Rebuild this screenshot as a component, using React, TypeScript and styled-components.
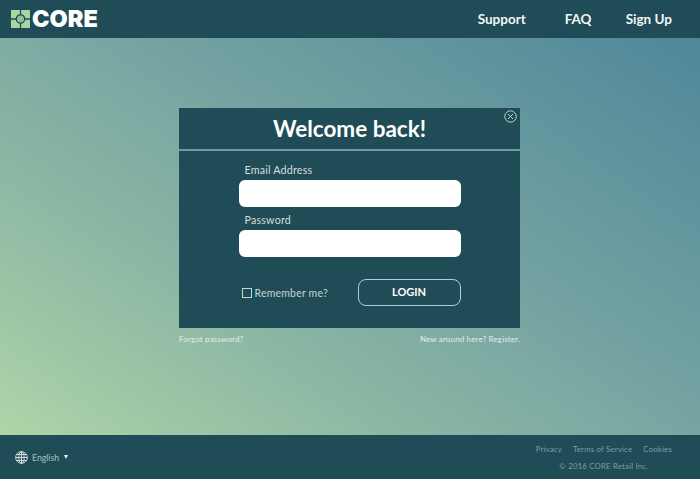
import styled, { createGlobalStyle } from "styled-components";

const Global = createGlobalStyle`
  html, body, #root {
    margin: 0;
    height: 100%;
  }
  body {
    font-family: Lato, "Open Sans", sans-serif;
  }
`;

const Page = styled.div`
  width: 700px;
  height: 479px;
  display: flex;
  flex-direction: column;
  overflow: hidden;
  background: linear-gradient(34deg, #b4d9a8 0%, #8db8a4 32%, #74a2a2 58%, #4b8498 100%);
`;

const Header = styled.header`
  height: 38px;
  flex-shrink: 0;
  background: #1f4c56;
  display: flex;
  align-items: center;
  justify-content: space-between;
  padding: 0 28px 0 11px;
`;

const Logo = styled.div`
  display: flex;
  align-items: center;
  gap: 2px;
`;

const LogoText = styled.span`
  font-family: Inter, sans-serif;
  font-weight: 900;
  font-size: 23.500px;
  line-height: 24px;
  color: #fff;
`;

const Nav = styled.nav`
  display: grid;
  grid-template-columns: 87px 61px auto;
`;

const NavLink = styled.a`
  font-family: Lato, sans-serif;
  font-weight: 700;
  font-size: 13.500px;
  color: #f2f6f6;
`;

const Main = styled.main`
  flex: 1;
  display: flex;
  flex-direction: column;
  align-items: center;
  padding: 70px 1px 0 0;
`;

const Modal = styled.section`
  position: relative;
  width: 341px;
  height: 220px;
  background: #1f4c56;
  display: flex;
  flex-direction: column;
`;

const ModalHead = styled.div`
  height: 41px;
  border-bottom: 2px solid #6a9ea3;
  display: flex;
  align-items: center;
  justify-content: center;
`;

const Title = styled.h1`
  margin: 0;
  font-family: Lato, sans-serif;
  font-weight: 700;
  font-size: 22.500px;
  color: #fff;
`;

const Close = styled.button`
  position: absolute;
  top: 2px;
  right: 3px;
  width: 13px;
  height: 13px;
  padding: 0;
  border: none;
  background: none;
  display: flex;
`;

const Form = styled.form`
  width: 222px;
  margin: 12px auto 0;
  display: flex;
  flex-direction: column;
`;

const Label = styled.label`
  font-size: 10.700px;
  line-height: 14px;
  padding-left: 6px;
  letter-spacing: 0.2px;
  color: #d5dfdf;
  margin-bottom: 3px;
`;

const Field = styled.input`
  height: 27px;
  border: none;
  border-radius: 6px;
  background: #fff;
  box-sizing: border-box;
  margin-bottom: 6px;
  &:last-of-type {
    margin-bottom: 0;
  }
`;

const Actions = styled.div`
  margin-top: 22px;
  display: flex;
  align-items: center;
  justify-content: space-between;
`;

const Remember = styled.label`
  display: flex;
  align-items: center;
  gap: 3px;
  padding-left: 3px;
  font-size: 10.500px;
  letter-spacing: 0.2px;
  color: #c5d4d5;
`;

const Box = styled.span`
  width: 8px;
  height: 8px;
  border: 1px solid #c5d4d5;
`;

const Login = styled.button`
  width: 103px;
  height: 27px;
  padding: 0 0 2px;
  border: 1px solid #b9cccd;
  border-radius: 8px;
  background: none;
  font-family: Lato, sans-serif;
  font-weight: 700;
  font-size: 11px;
  color: #fff;
`;

const Below = styled.div`
  width: 341px;
  margin-top: 6px;
  display: flex;
  justify-content: space-between;
`;

const SmallLink = styled.a`
  font-size: 8px;
  letter-spacing: 0.15px;
  color: #e3eeea;
`;

const Footer = styled.footer`
  height: 44px;
  flex-shrink: 0;
  background: #1f4c56;
  display: flex;
  align-items: center;
  justify-content: space-between;
  padding: 0 28px 0 15px;
`;

const Lang = styled.div`
  display: flex;
  align-items: center;
  gap: 4px;
  font-size: 8.700px;
  color: #a9c0c3;
`;

const Caret = styled.span`
  margin-left: 1px;
  width: 0;
  height: 0;
  border-left: 2.500px solid transparent;
  border-right: 2.500px solid transparent;
  border-top: 4px solid #e6eeee;
`;

const Legal = styled.div`
  display: flex;
  flex-direction: column;
  align-items: center;
  gap: 7px;
  font-size: 7.800px;
  letter-spacing: 0.2px;
  color: #7f9ea5;
`;

const LegalLinks = styled.div`
  display: flex;
  gap: 11px;
`;

function LogoMark() {
  return (
    <svg width="19" height="18" viewBox="0 0 19 18">
      <rect width="19" height="18" fill="#a8d5a0" />
      <path d="M9.500 0v18M0 9h19" stroke="#1f4c56" strokeWidth="1.300" />
      <circle cx="9.500" cy="9" r="4.200" fill="#8fc48f" stroke="#1f4c56" strokeWidth="1.300" />
    </svg>
  );
}

function Globe() {
  return (
    <svg width="13" height="13" viewBox="0 0 13 13" fill="none" stroke="#dfe8e8" strokeWidth="0.9">
      <circle cx="6.500" cy="6.500" r="5.800" />
      <ellipse cx="6.500" cy="6.500" rx="2.700" ry="5.800" />
      <path d="M6.500 0.700v11.600M0.700 6.500h11.600M1.500 3.500h10M1.500 9.500h10" />
    </svg>
  );
}

export default function App() {
  return (
    <Page>
      <Global />
      <Header>
        <Logo>
          <LogoMark />
          <LogoText>CORE</LogoText>
        </Logo>
        <Nav>
          <NavLink>Support</NavLink>
          <NavLink>FAQ</NavLink>
          <NavLink>Sign Up</NavLink>
        </Nav>
      </Header>
      <Main>
        <Modal>
          <ModalHead>
            <Title>Welcome back!</Title>
          </ModalHead>
          <Close type="button" aria-label="Close">
            <svg width="13" height="13" viewBox="0 0 13 13" fill="none" stroke="#d5e0e0" strokeWidth="0.9">
              <circle cx="6.500" cy="6.500" r="5.700" />
              <path d="M4 4l5 5M9 4l-5 5" />
            </svg>
          </Close>
          <Form>
            <Label>Email Address</Label>
            <Field type="text" />
            <Label>Password</Label>
            <Field type="password" />
            <Actions>
              <Remember>
                <Box />
                Remember me?
              </Remember>
              <Login type="button">LOGIN</Login>
            </Actions>
          </Form>
        </Modal>
        <Below>
          <SmallLink>Forgot password?</SmallLink>
          <SmallLink>New around here? Register.</SmallLink>
        </Below>
      </Main>
      <Footer>
        <Lang>
          <Globe />
          English
          <Caret />
        </Lang>
        <Legal>
          <LegalLinks>
            <span>Privacy</span>
            <span>Terms of Service</span>
            <span>Cookies</span>
          </LegalLinks>
          <span>© 2016 CORE Retail Inc.</span>
        </Legal>
      </Footer>
    </Page>
  );
}
